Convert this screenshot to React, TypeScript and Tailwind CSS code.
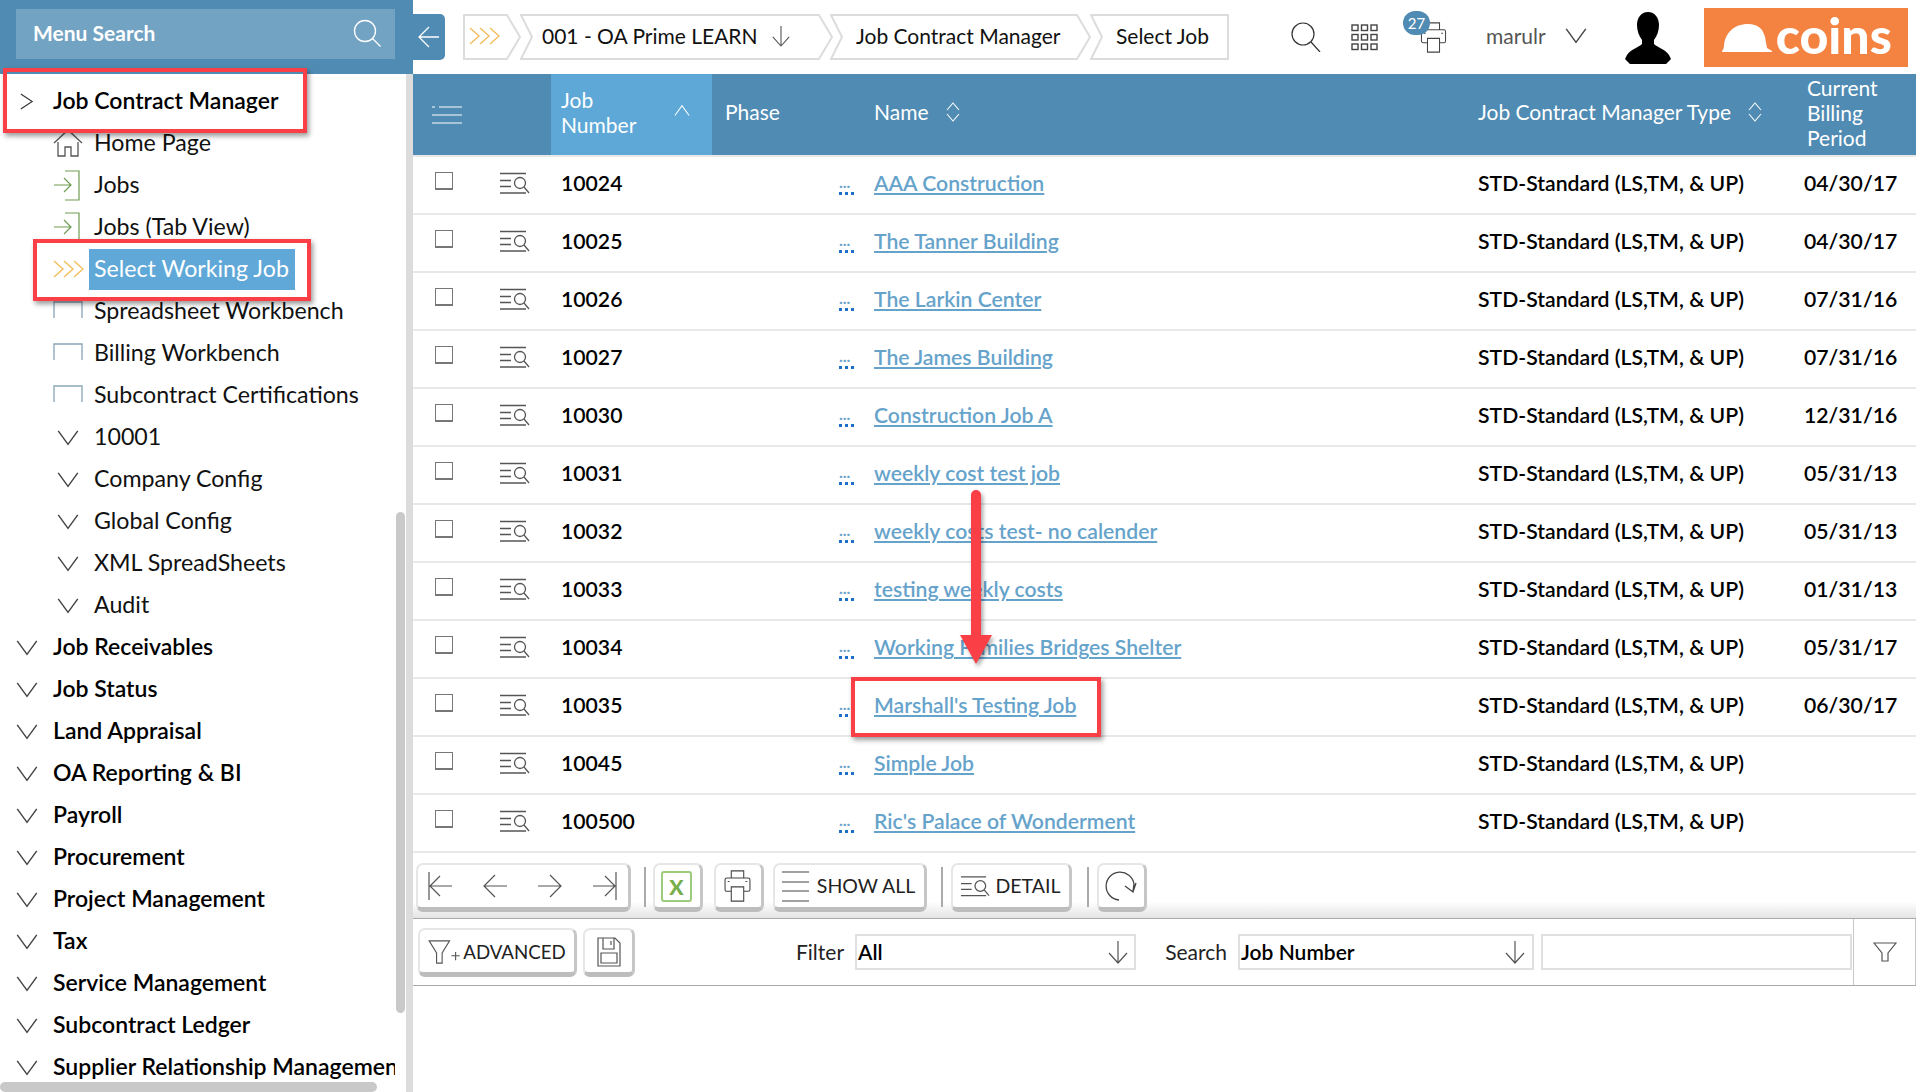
import React from 'react'

const jobs = [
  { num: '10024', name: 'AAA Construction', date: '04/30/17' },
  { num: '10025', name: 'The Tanner Building', date: '04/30/17' },
  { num: '10026', name: 'The Larkin Center', date: '07/31/16' },
  { num: '10027', name: 'The James Building', date: '07/31/16' },
  { num: '10030', name: 'Construction Job A', date: '12/31/16' },
  { num: '10031', name: 'weekly cost test job', date: '05/31/13' },
  { num: '10032', name: 'weekly costs test- no calender', date: '05/31/13' },
  { num: '10033', name: 'testing weekly costs', date: '01/31/13' },
  { num: '10034', name: 'Working Families Bridges Shelter', date: '05/31/17' },
  { num: '10035', name: "Marshall's Testing Job", date: '06/30/17' },
  { num: '10045', name: 'Simple Job', date: '' },
  { num: '100500', name: "Ric's Palace of Wonderment", date: '' },
]

const subItems = [
  { label: 'Home Page', icon: 'home' },
  { label: 'Jobs', icon: 'enter' },
  { label: 'Jobs (Tab View)', icon: 'enter' },
  { label: 'Select Working Job', icon: 'active' },
  { label: 'Spreadsheet Workbench', icon: 'box' },
  { label: 'Billing Workbench', icon: 'box' },
  { label: 'Subcontract Certifications', icon: 'box' },
  { label: '10001', icon: 'down' },
  { label: 'Company Config', icon: 'down' },
  { label: 'Global Config', icon: 'down' },
  { label: 'XML SpreadSheets', icon: 'down' },
  { label: 'Audit', icon: 'down' },
]

const topItems = [
  'Job Receivables',
  'Job Status',
  'Land Appraisal',
  'OA Reporting & BI',
  'Payroll',
  'Procurement',
  'Project Management',
  'Tax',
  'Service Management',
  'Subcontract Ledger',
  'Supplier Relationship Management',
]

const GRID = 'grid grid-cols-[76px_61px_162px_113px_49px_604px_316px_1fr]'

function Chevron({ dir = 'down', className = '' }: { dir?: 'down' | 'right' | 'up'; className?: string }) {
  const d = dir === 'down' ? 'M1 4l8 11 8-11' : dir === 'right' ? 'M3 1l12 8-12 8' : 'M1 14l8-11 8 11'
  return (
    <svg viewBox="0 0 18 18" className={className} fill="none" stroke="currentColor" strokeWidth="1.2">
      <path d={d} />
    </svg>
  )
}

function Triple({ className = '' }: { className?: string }) {
  return (
    <svg viewBox="0 0 31 18" className={className} fill="none" stroke="#f2bd5c" strokeWidth="1.4">
      <path d="M1 1l9 8-9 8M11 1l9 8-9 8M21 1l9 8-9 8" />
    </svg>
  )
}

function SortArrows() {
  return (
    <svg viewBox="0 0 16 20" className="w-4 h-5 ml-4" fill="none" stroke="white" strokeWidth="1.1">
      <path d="M2 8l6-7 6 7M2 12l6 7 6-7" />
    </svg>
  )
}

function DetailIcon({ className = '' }: { className?: string }) {
  return (
    <svg viewBox="0 0 31 22" className={className} fill="none" stroke="#555" strokeWidth="1.3">
      <path d="M1 1.5h26M1 8.5h11M1 14.5h11M1 21h26" />
      <circle cx="21" cy="11" r="5.5" />
      <path d="M25 15l5 6" />
    </svg>
  )
}

function DownArrow({ className = '' }: { className?: string }) {
  return (
    <svg viewBox="0 0 22 24" className={className} fill="none" stroke="#555" strokeWidth="1.2">
      <path d="M11 1v21M2 13l9 10 9-10" />
    </svg>
  )
}

function PrinterIcon({ className = '' }: { className?: string }) {
  return (
    <svg viewBox="0 0 30 36" className={className} fill="none" stroke="#444" strokeWidth="1.2">
      <path d="M8 9V1h14v8M8 24H3a2 2 0 0 1-2-2V11a2 2 0 0 1 2-2h24a2 2 0 0 1 2 2v11a2 2 0 0 1-2 2h-5" />
      <path d="M8 19h14v16H8zM4 13h2M24 13h2" />
    </svg>
  )
}

function SubIcon({ type }: { type: string }) {
  if (type === 'home') {
    return (
      <svg viewBox="0 0 30 28" className="w-[30px] h-[28px]" fill="none" stroke="#555" strokeWidth="1.3">
        <path d="M1 14L15 1l14 13M5 13v14h7v-9h6v9h7V13" />
      </svg>
    )
  }
  if (type === 'enter') {
    return (
      <svg viewBox="0 0 27 31" className="w-[27px] h-[31px]" fill="none" stroke="#6f9b52" strokeWidth="1.2">
        <path d="M12 1h14v29H12M1 15h17M11 8l7 7-7 7" />
      </svg>
    )
  }
  if (type === 'active') return <Triple className="w-[31px] h-[18px]" />
  if (type === 'box') {
    return (
      <svg viewBox="0 0 30 17" className="w-[30px] h-[17px] mt-[-3px]" fill="none" stroke="#8aa5b8" strokeWidth="1.3">
        <path d="M1 17V1h28v16" />
      </svg>
    )
  }
  return <Chevron className="w-[22px] h-[22px] text-[#444] ml-[4px]" />
}

function Sidebar() {
  return (
    <aside className="w-[413px] h-full shrink-0 relative flex flex-col overflow-hidden">
      <div className="h-[74px] shrink-0 bg-[#4f8bb3] pt-[9px] pl-[16px] pr-[18px]">
        <div className="h-[50px] bg-[#72a3c2] flex items-center justify-between pl-[17px] pr-[14px] pb-[3px]">
          <span className="text-white text-[21px] font-bold">Menu Search</span>
          <svg viewBox="0 0 28 28" className="w-[28px] h-[28px]" fill="none" stroke="white" strokeWidth="1.3">
            <circle cx="12" cy="12" r="10.5" />
            <path d="M19.5 19.5l8 8" />
          </svg>
        </div>
      </div>

      <div className="flex-1 flex min-h-0">
        <div className="w-[406px] overflow-hidden pt-[6px]">
          <div className="h-[42px] flex items-center pl-[18px] w-[406px]">
            <Chevron dir="right" className="w-[17px] h-[17px] text-[#333] shrink-0" />
            <span className="ml-[18px] mt-[-2px] text-[23px] font-semibold text-black">Job Contract Manager</span>
          </div>
          {subItems.map((item) => (
            <div key={item.label} className="h-[42px] flex items-center pl-[53px]">
              <div className="w-[36px] shrink-0 flex items-center">
                <SubIcon type={item.icon} />
              </div>
              {item.icon === 'active' ? (
                <span className="h-[41px] mt-[1px] leading-[39px] w-[206px] pl-[5px] bg-[#5fa8d8] text-white text-[23.2px] whitespace-nowrap">{item.label}</span>
              ) : (
                <span className="pl-[5px] mt-[-2px] text-[23.2px] text-[#111] whitespace-nowrap">{item.label}</span>
              )}
            </div>
          ))}
          {topItems.map((label) => (
            <div key={label} className="h-[42px] flex items-center pl-[16px] w-[395px] overflow-hidden">
              <Chevron className="w-[22px] h-[22px] text-[#444] shrink-0" />
              <span className="ml-[15px] mt-[-2px] text-[23px] font-semibold text-black whitespace-nowrap">{label}</span>
            </div>
          ))}
        </div>
        <div className="w-[7px] bg-[#dcdcdc] shrink-0" />
      </div>

      {/* scrollbars */}
      <div className="absolute left-[396px] top-[512px] w-[9px] h-[501px] rounded-[5px] bg-[#c9c9c9]" />
      <div className="absolute left-0 top-[1082px] w-[377px] h-[10px] rounded-[5px] bg-[#c9c9c9]" />
    </aside>
  )
}

function Crumb({ w, children, first }: { w: number; children?: React.ReactNode; first?: boolean }) {
  const points = first
    ? `1,1 ${w - 14},1 ${w - 1},23 ${w - 14},45 1,45`
    : `1,1 ${w - 14},1 ${w - 1},23 ${w - 14},45 1,45 12,23`
  return (
    <div className="relative h-[46px] flex items-center shrink-0" style={{ width: w }}>
      <svg className="absolute inset-0" width={w} height={46} fill="white" stroke="#dcdcdc" strokeWidth="2">
        <polygon points={points} />
      </svg>
      <div className="relative flex items-center text-[21px] text-[#111] whitespace-nowrap mt-[-2px]">
        {children}
      </div>
    </div>
  )
}

function TopBar() {
  return (
    <div className="h-[74px] shrink-0 flex items-start">
      <button className="mt-[14px] w-[32px] h-[46px] bg-[#4f8bb3] rounded-r-[5px] flex items-center justify-center">
        <svg viewBox="0 0 22 22" className="w-[22px] h-[22px]" fill="none" stroke="white" strokeWidth="1.3">
          <path d="M21 11H1M11 1L1 11l10 10" />
        </svg>
      </button>
      <div className="mt-[14px] ml-[18px] flex">
        <Crumb w={58} first>
          <Triple className="w-[31px] h-[18px] ml-[6px]" />
        </Crumb>
        <div className="ml-[-1px]">
          <Crumb w={313}>
            <span className="ml-[22px]">001 - OA Prime LEARN</span>
            <DownArrow className="w-[20px] h-[24px] ml-[13px]" />
          </Crumb>
        </div>
        <div className="ml-[-3px]">
          <Crumb w={261}>
            <span className="ml-[26px]">Job Contract Manager</span>
          </Crumb>
        </div>
        <div className="ml-[-1px]">
          <div className="relative h-[46px] w-[139px] flex items-center">
            <svg className="absolute inset-0" width={139} height={46} fill="white" stroke="#dcdcdc" strokeWidth="2">
              <polygon points="1,1 138,1 138,45 1,45 12,23" />
            </svg>
            <span className="relative ml-[26px] mt-[-2px] text-[21px] text-[#111]">Select Job</span>
          </div>
        </div>
      </div>

      <svg viewBox="0 0 30 30" className="w-[30px] h-[30px] mt-[22px] ml-[62px]" fill="none" stroke="#333" strokeWidth="1.2">
        <circle cx="12" cy="12" r="11" />
        <path d="M20 20l9 10" />
      </svg>
      <svg viewBox="0 0 27 27" className="w-[27px] h-[27px] mt-[24px] ml-[30px]" fill="none" stroke="#444" strokeWidth="1.4">
        {[1, 10.5, 20].map((y) =>
          [1, 10.5, 20].map((x) => <rect key={`${x}-${y}`} x={x} y={y} width="6" height="5.5" />),
        )}
      </svg>
      <div className="relative w-[46px] h-[50px] ml-[25px] mt-[11px]">
        <PrinterIcon className="absolute left-[16px] top-[11px] w-[29px] h-[31px]" />
        <div className="absolute left-0 top-0 w-[27px] h-[24px] rounded-full bg-[#4f8bb3] text-white text-[15px] flex items-center justify-center">27</div>
      </div>
      <span className="ml-[37px] mt-[20px] text-[21px] text-[#555]">marulr</span>
      <Chevron className="w-[22px] h-[22px] mt-[24px] ml-[19px] text-[#444]" />
      <svg viewBox="0 0 46 52" className="w-[46px] h-[52px] mt-[12px] ml-[38px]" fill="black">
        <path d="M23 0c7 0 11 6 11 13 0 6-2 11-5 15v4c3 3 12 6 15 11l2 4-5 5H5l-5-5 2-4c3-5 12-8 15-11v-4c-3-4-5-9-5-15C12 6 16 0 23 0z" />
      </svg>
      <div className="mt-[8px] ml-[33px] w-[204px] h-[59px] bg-[#f48342] flex items-center pl-[18px]">
        <svg viewBox="0 0 50 29" className="w-[50px] h-[29px] shrink-0" fill="white">
          <path d="M0 29c0-2 2-3 2-6C3 10 12 1 26 1c10 0 15 5 17 13l2 11 5 3v1z" />
        </svg>
        <span className="ml-[4px] mt-[-5px] text-white text-[50px] font-black leading-none">coins</span>
      </div>
    </div>
  )
}

function TableHeader() {
  return (
    <div className={`${GRID} h-[81px] shrink-0 bg-[#4f8bb3] text-white text-[21px] items-center`}>
      <div className="col-span-2 pl-[19px]">
        <svg viewBox="0 0 30 18" className="w-[30px] h-[18px]" fill="none" stroke="white" strokeWidth="1.2">
          <path d="M0 1h3M7 1h23M0 9h30M0 17h30" />
        </svg>
      </div>
      <div className="h-full bg-[#5ea8d7] pl-[10px] pb-[5px] flex items-center justify-between pr-[22px] leading-[25px] ml-[1px]">
        <span>Job<br />Number</span>
        <Chevron dir="up" className="w-[16px] h-[16px] mb-[3px]" />
      </div>
      <div className="col-span-2 pl-[13px] pb-[5px]">Phase</div>
      <div className="flex items-center pb-[5px]">
        Name
        <SortArrows />
      </div>
      <div className="flex items-center pb-[5px]">
        Job Contract Manager Type
        <SortArrows />
      </div>
      <div className="pl-[13px] pb-[5px] leading-[25px]">Current<br />Billing<br />Period</div>
    </div>
  )
}

function JobRow({ job }: { job: (typeof jobs)[number] }) {
  return (
    <div className={`${GRID} h-[58px] border-t-2 border-[#e8e8e8] pb-[2px] items-center text-[21.2px] font-semibold text-black`}>
      <div className="pl-[22px] pb-[6px]">
        <div className="w-[18px] h-[18px] border border-[#777] border-b-2" />
      </div>
      <div className="pl-[10px] pb-[2px]">
        <DetailIcon className="w-[31px] h-[22px]" />
      </div>
      <div className="pl-[11px]">{job.num}</div>
      <div />
      <div className="pl-[14px] pt-[4px]">
        <span className="block w-[15px] h-[18px] leading-[10px] text-[16px] font-bold text-[#6aa3c8] border-b-[3px] border-dotted border-[#1b6fc8]">...</span>
      </div>
      <div>
        <span className="text-[#66a3cb] underline decoration-2 underline-offset-2">{job.name}</span>
      </div>
      <div>STD-Standard (LS,TM, &amp; UP)</div>
      <div className="pl-[10px]">{job.date}</div>
    </div>
  )
}

const toolBtn = 'h-[49px] bg-white rounded-[7px] border-2 border-[#e6e6e6] border-b-[5px] border-b-[#bdbdbd] border-r-[3px] border-r-[#c6c6c6] flex items-center justify-center shrink-0'

function Sep() {
  return <div className="w-[2px] h-[40px] bg-[#aaa] shrink-0" />
}

function Toolbar() {
  return (
    <div className="h-[68px] shrink-0 border-t-2 border-b border-t-[#e8e8e8] border-b-[#aaa] bg-gradient-to-b from-white from-75% to-[#e4e4e4] flex items-start pt-[10px] pl-[3px]">
      <div className={`${toolBtn} w-[215px] gap-[31px] pr-[2px]`}>
        <svg viewBox="0 0 24 28" className="w-[24px] h-[28px]" fill="none" stroke="#555" strokeWidth="1.2"><path d="M1 0v28M24 14H2M12 4L2 14l10 10" /></svg>
        <svg viewBox="0 0 24 24" className="w-[24px] h-[24px]" fill="none" stroke="#555" strokeWidth="1.2"><path d="M24 12H1M12 1L1 12l11 11" /></svg>
        <svg viewBox="0 0 24 24" className="w-[24px] h-[24px]" fill="none" stroke="#555" strokeWidth="1.2"><path d="M0 12h23M12 1l11 11-11 11" /></svg>
        <svg viewBox="0 0 24 28" className="w-[24px] h-[28px]" fill="none" stroke="#555" strokeWidth="1.2"><path d="M23 0v28M0 14h22M12 4l10 10-10 10" /></svg>
      </div>
      <div className="ml-[13px] mt-[4px]"><Sep /></div>
      <div className={`${toolBtn} w-[50px] ml-[7px] pr-[2px]`}>
        <div className="w-[31px] h-[31px] shrink-0 border-2 border-[#9ccb7c] rounded-[3px] flex items-center justify-center text-[#78ae4a] text-[21px] font-black leading-none">X</div>
      </div>
      <div className={`${toolBtn} w-[50px] ml-[11px] pr-[2px]`}>
        <PrinterIcon className="w-[31px] h-[32px] shrink-0" />
      </div>
      <div className={`${toolBtn} w-[154px] ml-[9px] pr-[2px] text-[19.5px] text-[#222]`}>
        <svg viewBox="0 0 27 31" className="w-[27px] h-[31px] mr-[8px]" fill="none" stroke="#444" strokeWidth="1.2"><path d="M0 1h27M0 11h27M0 20h27M0 30h27" /></svg>
        SHOW ALL
      </div>
      <div className="ml-[14px] mt-[4px]"><Sep /></div>
      <div className={`${toolBtn} w-[121px] ml-[8px] pr-[2px] text-[19.5px] text-[#222]`}>
        <DetailIcon className="w-[30px] h-[22px] mr-[6px]" />
        DETAIL
      </div>
      <div className="ml-[15px] mt-[4px]"><Sep /></div>
      <div className={`${toolBtn} w-[50px] ml-[8px] pr-[2px]`}>
        <svg viewBox="0 0 32 30" className="w-[32px] h-[30px] shrink-0" fill="none" stroke="#444" strokeWidth="1.3">
          <path d="M14 29A14 14 0 1 1 29 13l-1 7M20 15l8 6 3-9" />
        </svg>
      </div>
    </div>
  )
}

function FilterBar() {
  return (
    <div className="h-[67px] shrink-0 border-b border-[#aaa] flex items-center pl-[5px] text-[21px] text-[#222]">
      <div className={`${toolBtn} w-[159px] pt-[3px] text-[18.7px] gap-[3px]`}>
        <svg viewBox="0 0 34 28" className="w-[32px] h-[26px]" fill="none" stroke="#555" strokeWidth="1.2">
          <path d="M1 2h22l-8 13v11H9V15zM25 18h9M29.5 14v9" />
        </svg>
        ADVANCED
      </div>
      <div className={`${toolBtn} w-[52px] ml-[6px] pt-[3px]`}>
        <svg viewBox="0 0 24 30" className="w-[24px] h-[30px] shrink-0" fill="none" stroke="#555" strokeWidth="1.2">
          <path d="M1 1h17l5 5v23H1zM6 1v11h11V1M4 16h16v10H4zM14 4v4" />
        </svg>
      </div>
      <span className="ml-[161px]">Filter</span>
      <div className="ml-[11px] w-[282px] h-[36px] border-2 border-[#e0e0e0] flex items-center justify-between pl-[1px] pr-[5px] font-semibold text-black">
        All
        <DownArrow className="w-[22px] h-[24px]" />
      </div>
      <span className="ml-[29px]">Search</span>
      <div className="ml-[11px] w-[297px] h-[36px] border-2 border-[#e0e0e0] flex items-center justify-between pl-[1px] pr-[6px] font-semibold text-black">
        Job Number
        <DownArrow className="w-[22px] h-[24px]" />
      </div>
      <div className="ml-[7px] w-[312px] h-[36px] border-2 border-[#e0e0e0]" />
      <div className="h-full w-[63px] ml-[1px] border-l border-r border-[#c8c8c8] flex items-center justify-center">
        <svg viewBox="0 0 24 20" className="w-[24px] h-[20px]" fill="none" stroke="#555" strokeWidth="1.2">
          <path d="M1 1h22l-8 10v8H9v-8z" />
        </svg>
      </div>
    </div>
  )
}

function Annotations() {
  const box = 'absolute border-4 border-[#fb3f46] shadow-[2px_3px_5px_rgba(0,0,0,0.4)] pointer-events-none'
  return (
    <>
      <div className={`${box} left-[3px] top-[68px] w-[304px] h-[65px]`} />
      <div className={`${box} left-[33px] top-[239px] w-[278px] h-[62px]`} />
      <div className={`${box} left-[851px] top-[677px] w-[250px] h-[60px]`} />
      <svg className="absolute left-[950px] top-[485px] pointer-events-none drop-shadow-[2px_3px_2px_rgba(0,0,0,0.35)]" width="52" height="190" fill="#fb3f46">
        <path d="M21 10a5 5 0 0 1 10 0v140h11l-16 29-16-29h11z" />
      </svg>
    </>
  )
}

export default function App() {
  return (
    <div className="relative w-[1916px] h-[1092px] overflow-hidden bg-white flex font-['Lato',sans-serif]">
      <Sidebar />
      <main className="flex-1 min-w-0 flex flex-col">
        <TopBar />
        <TableHeader />
        {jobs.map((job) => (
          <JobRow key={job.num} job={job} />
        ))}
        <Toolbar />
        <FilterBar />
      </main>
      <Annotations />
    </div>
  )
}
